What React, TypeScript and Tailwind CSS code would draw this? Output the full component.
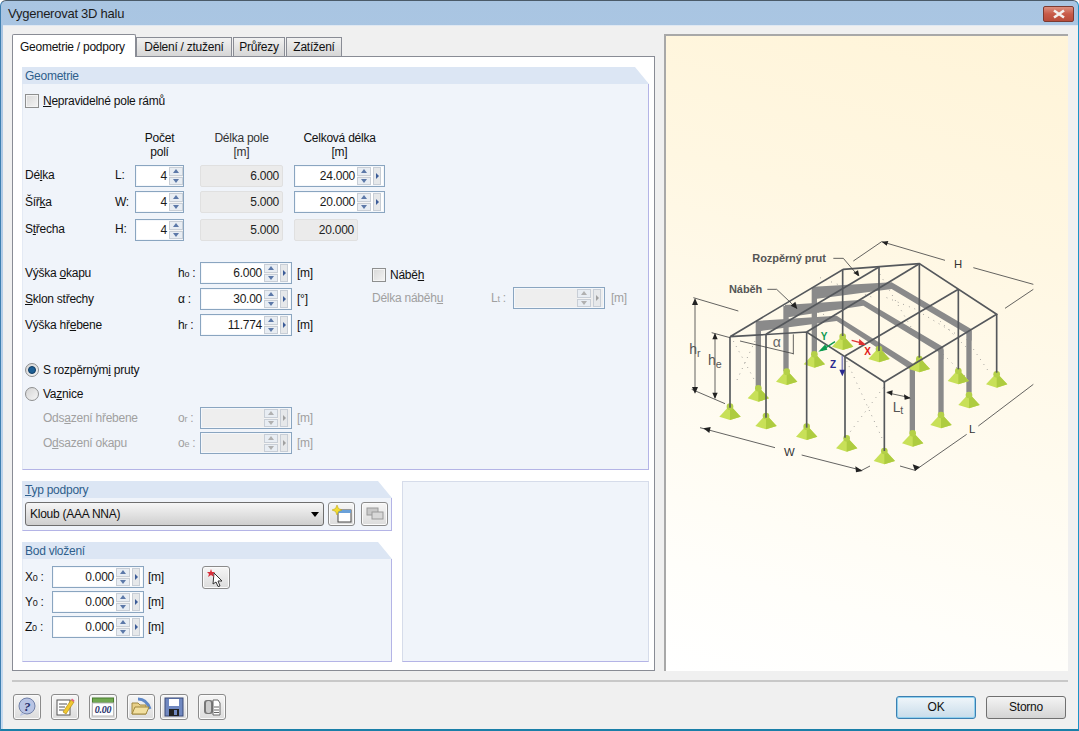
import type { ReactNode } from "react";

const font = "font-['Liberation_Sans',Arial,sans-serif]";

function Spin({ w, val, arrow = true, off = false }: { w: string; val?: string; arrow?: boolean; off?: boolean }) {
  return (
    <div className={`${w} h-[22px] flex items-center border border-[#8aa5c0] ${off ? "bg-[#eeeeee]" : "bg-white"} shadow-[inset_0_0_0_1px_#f4f7fb]`}>
      <span className="flex-1 text-right text-[#1a1a1a] pr-[2px] leading-none">{val}</span>
      <div className="w-[14px] h-[18px] flex flex-col gap-[1px] bg-[#f4f4f4]">
        <div className="flex-1 flex items-center justify-center bg-[#e8edf3] border border-[#c8ced6]">
          <div className={`w-0 h-0 border-x-[3px] border-x-transparent border-b-[4px] ${off ? "border-b-[#b0b0b0]" : "border-b-[#5c78a8]"}`} />
        </div>
        <div className="flex-1 flex items-center justify-center bg-[#e8edf3] border border-[#c8ced6]">
          <div className={`w-0 h-0 border-x-[3px] border-x-transparent border-t-[4px] ${off ? "border-t-[#b0b0b0]" : "border-t-[#5c78a8]"}`} />
        </div>
      </div>
      {arrow && (
        <div className="ml-[2px] mr-[3px] w-[8px] h-[18px] flex items-center justify-center bg-[#e6e8ea] border border-[#c8ced6]">
          <div className={`w-0 h-0 border-y-[3px] border-y-transparent border-l-[3px] ${off ? "border-l-[#a0a0a0]" : "border-l-[#3c5c98]"}`} />
        </div>
      )}
    </div>
  );
}

function ReadOnly({ w, val }: { w: string; val: string }) {
  return (
    <div className={`${w} h-[22px] flex items-center justify-end pr-[3px] bg-[#ebebeb] border border-[#e0e0e0] rounded-[2px] text-[#222]`}>
      {val}
    </div>
  );
}

function Check({ label }: { label: ReactNode }) {
  return (
    <div className="flex items-center gap-[4px] text-[#111]">
      <div className="w-[14px] h-[14px] border border-[#8e8f8f] bg-linear-to-br from-[#d8d8d8] to-[#f4f4f4] shadow-[inset_0_0_0_1px_#f4f4f4]" />
      <span>{label}</span>
    </div>
  );
}

function Radio({ on, label }: { on?: boolean; label: ReactNode }) {
  return (
    <div className="flex items-center gap-[4px] text-[#111] h-[14px]">
      <div className="w-[14px] h-[14px] rounded-full border border-[#8e8f8f] bg-linear-to-br from-[#d4d4d4] to-[#f6f6f6] flex items-center justify-center">
        {on && <div className="w-[8px] h-[8px] rounded-full bg-[#1d5f95] border border-[#0f3c63]" />}
      </div>
      <span>{label}</span>
    </div>
  );
}

function Group({ title, w, h, children }: { title?: ReactNode; w: string; h: string; children?: ReactNode }) {
  return (
    <div className={`${w} ${h} shrink-0 flex flex-col`}>
      {title && (
        <div className="h-[17px] shrink-0 pl-[3px] text-[#2f5f8c] leading-[18px] bg-[#dce6f4] [clip-path:polygon(0_0,calc(100%-14px)_0,100%_100%,0_100%)]">
          {title}
        </div>
      )}
      <div className="flex-1 bg-[#f0f4fa] border-b border-r border-[#b4b4e6] border-l border-l-[#e4eaf4] pl-[2px] pr-[3px]">{children}</div>
    </div>
  );
}

function Sym({ a, b }: { a: string; b?: string }) {
  return (
    <span>
      {a}
      {b && <span className="text-[9px]">{b}</span>}
      {" :"}
    </span>
  );
}

function ToolBtn({ w = "w-[28px]", h = "h-[26px]", children }: { w?: string; h?: string; children: ReactNode }) {
  return (
    <div className={`${w} ${h} flex items-center justify-center rounded-[3px] border border-[#8b8b8b] bg-linear-to-b from-[#f6f6f6] to-[#dcdcdc] shadow-[inset_0_0_0_1px_#fbfbfb]`}>
      {children}
    </div>
  );
}

function Foot({ x, y }: { x: number; y: number }) {
  return (
    <g>
      <polygon points={`${x - 32},${y + 12} ${x - 8},${y - 14} ${x + 8},${y - 14} ${x + 32},${y + 12} ${x},${y + 22}`} fill="#c8e058" />
      <polygon points={`${x},${y - 14} ${x + 8},${y - 14} ${x + 32},${y + 12} ${x},${y + 22}`} fill="#aecc40" />
      <circle cx={x} cy={y - 18} r={10} fill="#b4d048" />
    </g>
  );
}

function Diagram() {
  const feet = [
    [150, 575], [258, 603], [380, 635], [500, 670], [613, 708], [698, 655], [783, 600], [867, 540], [950, 478],
    [835, 468], [718, 432], [597, 402], [488, 365], [403, 418], [320, 470], [235, 520],
  ];
  const thin = [
    "M150 347V560", "M258 340V590", "M380 333V620", "M495 405V650", "M613 483V690",
    "M488 145V345", "M597 138V390", "M718 128V410", "M835 205V445", "M950 280V455",
    "M150 347L490 145L718 128L950 280L613 483L380 333L150 347",
    "M380 333L718 128", "M258 340L597 138", "M495 405L835 205",
  ];
  const thick = ["M235 305V500", "M318 255V450", "M403 200V395", "M697 440V635", "M783 385V580", "M867 330V515"];
  const bands = [
    "228,300 470,284 705,432 705,470 690,445 470,300 228,332",
    "315,252 550,236 790,378 790,415 775,392 550,254 315,290",
    "400,197 635,184 875,325 875,360 860,338 635,204 400,235",
  ];
  const dots = [
    "M160 360L225 480", "M225 360L165 490", "M500 420L610 660", "M610 500L505 640",
    "M620 230L720 270", "M730 280L830 340", "M780 300L860 380", "M600 160L700 330", "M330 240L480 300", "M420 170L580 230",
    "M850 340L925 450", "M790 400L860 470",
  ];
  const dim = [
    "M520 120L605 62", "M605 62L795 118", "M880 140L1060 190", "M975 262L1060 205", "M40 230L175 270",
    "M45 235V515", "M35 505L135 548", "M105 340V530", "M95 335L150 350", "M60 620L285 680", "M365 702L545 748",
    "M545 748L570 735", "M660 735L705 748", "M705 748L860 640", "M895 615L1060 490", "M620 515L690 530",
    "M180 360L340 398", "M340 340V400", "M460 112H490L535 165", "M262 205H290L350 262",
  ];
  const heads = [
    "605,62 625,60 620,74", "45,232 36,252 54,252", "45,518 36,498 54,498", "105,336 97,355 113,355", "105,534 97,515 113,515",
    "70,622 92,618 88,636", "548,750 526,736 528,754", "705,750 698,730 720,738", "620,513 638,508 636,524", "692,532 672,520 674,536",
    "538,166 520,156 534,148", "352,264 332,254 346,242",
  ];
  return (
    <svg width={380} height={260} viewBox="0 0 1140 780" className="block">
      {dots.map((d) => (
        <path key={d} d={d} stroke="#777" strokeWidth={3} strokeDasharray="2 16" fill="none" />
      ))}
      {thick.map((d) => (
        <path key={d} d={d} stroke="#8a8a8a" strokeWidth={16} fill="none" />
      ))}
      {bands.map((p) => (
        <polygon key={p} points={p} fill="#8a8a8a" />
      ))}
      {feet.map(([x, y]) => (
        <Foot key={`${x}-${y}`} x={x} y={y} />
      ))}
      {thin.map((d) => (
        <path key={d} d={d} stroke="#55585c" strokeWidth={5} fill="none" />
      ))}
      {dim.map((d) => (
        <path key={d} d={d} stroke="#444" strokeWidth={2.5} fill="none" />
      ))}
      {heads.map((p) => (
        <polygon key={p} points={p} fill="#222" />
      ))}
      <path d="M465 362L425 388" stroke="#0d9b50" strokeWidth={4} />
      <polygon points="415,392 436,370 442,386" fill="#0d9b50" />
      <path d="M515 358L552 368" stroke="#e03030" strokeWidth={4} />
      <polygon points="558,372 538,354 536,372" fill="#e03030" />
      <path d="M487 405V450" stroke="#8a8ac0" strokeWidth={5} />
      <polygon points="478,446 496,446 487,466" fill="#2a2a90" />
      <g fontFamily="'Liberation Sans',Arial,sans-serif">
        <text x={217} y={122} fontSize={33} fontWeight={700} fill="#555">Rozpěrný prut</text>
        <text x={147} y={216} fontSize={33} fontWeight={700} fill="#555">Náběh</text>
        <text x={822} y={140} fontSize={34} fill="#333">H</text>
        <text x={28} y={400} fontSize={42} fill="#555">h<tspan fontSize={32} dy={8}>r</tspan></text>
        <text x={84} y={432} fontSize={42} fill="#555">h<tspan fontSize={32} dy={8}>e</tspan></text>
        <text x={278} y={378} fontSize={42} fill="#666">α</text>
        <text x={638} y={572} fontSize={42} fill="#555">L<tspan fontSize={32} dy={8}>t</tspan></text>
        <text x={312} y={706} fontSize={34} fill="#333">W</text>
        <text x={867} y={636} fontSize={34} fill="#333">L</text>
        <text x={422} y={358} fontSize={30} fontWeight={700} fill="#0d9b50">Y</text>
        <text x={553} y={402} fontSize={30} fontWeight={700} fill="#e01818">X</text>
        <text x={450} y={440} fontSize={30} fontWeight={700} fill="#2a2a90">Z</text>
      </g>
    </svg>
  );
}

export default function App() {
  return (
    <div className={`${font} text-[12px] tracking-[-0.25px] w-[1079px] h-[731px] overflow-hidden flex flex-col rounded-t-[6px] border border-[#4a5a68] border-l-[#3f7fb0] border-r-[#1a93c8] border-b-2 border-b-[#1a7fa8] bg-linear-to-b from-[#a9c5e2] to-[#c4daf0]`}>
      {/* titulek */}
      <div className="h-[24px] shrink-0 flex items-center justify-between pl-[7px] pr-[4px] text-[#1c1c1c]">
        <span className="text-[13px] mt-[1px]">Vygenerovat 3D halu</span>
        <div className="w-[31px] h-[16px] mt-[1px] flex items-center justify-center rounded-[2px] border border-[#7d3a30] bg-linear-to-b from-[#dc9080] via-[#c85a48] to-[#b84c3a]">
          <svg width="14" height="10" viewBox="0 0 14 10">
            <path d="M2 1.5L12 8.5M12 1.5L2 8.5" stroke="#f4f0ee" strokeWidth="2.6" />
          </svg>
        </div>
      </div>

      <div className="flex-1 ml-[2px] bg-[#f0f0f0] border-t border-[#dfe8f2] flex flex-col pl-[9px] pr-[10px] pt-[8px]">
        <div className="flex gap-[9px]">
          {/* levá část */}
          <div className="w-[643px] flex flex-col">
            <div className="flex items-end h-[23px] relative z-10 -mb-[1px]">
              <div className="w-[124px] h-[23px] bg-white border border-b-0 border-[#898c95] rounded-t-[2px] pl-[7px] pt-[3px] text-[#111]">Geometrie / podpory</div>
              <div className="w-[96px] h-[20px] bg-linear-to-b from-[#f2f2f2] to-[#d6d6d6] border border-[#898c95] flex items-center justify-center text-[#111]">Dělení / ztužení</div>
              <div className="ml-[1px] w-[52px] h-[20px] bg-linear-to-b from-[#f2f2f2] to-[#d6d6d6] border border-[#898c95] flex items-center justify-center text-[#111]">Průřezy</div>
              <div className="ml-[1px] w-[56px] h-[20px] bg-linear-to-b from-[#f2f2f2] to-[#d6d6d6] border border-[#898c95] flex items-center justify-center text-[#111]">Zatížení</div>
            </div>
            <div className="h-[615px] bg-white border border-[#898c95] px-[9px] pt-[10px] flex flex-col gap-[11px]">
              <Group title="Geometrie" w="w-[627px]" h="h-[403px]">
                <div className="pt-[8px]">
                  <Check label={<><u>N</u>epravidelné pole rámů</>} />
                </div>
                <div className="mt-[21px] grid [grid-template-columns:90px_20px_65px_94px_91px] text-[#111]">
                  <div className="col-start-3 w-[49px] text-center leading-[14px] whitespace-nowrap h-[34px]">Počet<br />polí</div>
                  <div className="w-[83px] text-center leading-[14px] text-[#333]">Délka pole<br />[m]</div>
                  <div className="text-center leading-[14px]">Celková délka<br />[m]</div>

                  <div className="h-[26px] pb-[6px] flex items-center"><span>Dé<u>l</u>ka</span></div>
                  <div className="h-[26px] pb-[6px] flex items-center">L:</div>
                  <Spin w="w-[49px]" val="4" arrow={false} />
                  <ReadOnly w="w-[83px]" val="6.000" />
                  <Spin w="w-[91px]" val="24.000" />

                  <div className="h-[28px] pb-[6px] flex items-center"><span>Šíř<u>k</u>a</span></div>
                  <div className="h-[28px] pb-[6px] flex items-center">W:</div>
                  <Spin w="w-[49px]" val="4" arrow={false} />
                  <ReadOnly w="w-[83px]" val="5.000" />
                  <Spin w="w-[91px]" val="20.000" />

                  <div className="h-[26px] pb-[6px] flex items-center"><span>S<u>t</u>řecha</span></div>
                  <div className="h-[26px] pb-[6px] flex items-center">H:</div>
                  <Spin w="w-[49px]" val="4" arrow={false} />
                  <ReadOnly w="w-[83px]" val="5.000" />
                  <ReadOnly w="w-[64px]" val="20.000" />
                </div>

                <div className="mt-[17px] flex">
                  <div className="w-[347px] grid [grid-template-columns:153px_22px_97px_1fr] auto-rows-[26px] items-start text-[#111]">
                    <div className="h-[22px] flex items-center"><span>Výška <u>o</u>kapu</span></div>
                    <div className="h-[22px] flex items-center"><Sym a="h" b="o" /></div>
                    <Spin w="w-[92px]" val="6.000" />
                    <div className="h-[22px] flex items-center">[m]</div>
                    <div className="h-[22px] flex items-center"><span><u>S</u>klon střechy</span></div>
                    <div className="h-[22px] flex items-center"><Sym a="α" /></div>
                    <Spin w="w-[92px]" val="30.00" />
                    <div className="h-[22px] flex items-center">[°]</div>
                    <div className="h-[22px] flex items-center"><span>Výška hř<u>e</u>bene</span></div>
                    <div className="h-[22px] flex items-center"><Sym a="h" b="r" /></div>
                    <Spin w="w-[92px]" val="11.774" />
                    <div className="h-[22px] flex items-center">[m]</div>
                  </div>
                  <div className="flex-1 flex flex-col gap-[3px] pt-[4px] text-[#a0a0a0]">
                    <Check label={<>Nábě<u>h</u></>} />
                    <div className="flex items-center h-[22px]">
                      <span className="w-[119px]">Délka náběh<u>u</u></span>
                      <span className="w-[22px]"><Sym a="L" b="t" /></span>
                      <Spin w="w-[92px]" off />
                      <span className="ml-[6px]">[m]</span>
                    </div>
                  </div>
                </div>

                <div className="mt-[23px] flex flex-col gap-[10px]">
                  <Radio on label={<>S rozpěrným<u>i</u> pruty</>} />
                  <Radio label={<>Va<u>z</u>nice</>} />
                </div>
                <div className="mt-[6px] pl-[18px] grid [grid-template-columns:135px_22px_97px_1fr] auto-rows-[25px] items-start text-[#a0a0a0]">
                  <div className="h-[22px] flex items-center"><span>Ods<u>a</u>zení hřebene</span></div>
                  <div className="h-[22px] flex items-center"><Sym a="o" b="r" /></div>
                  <Spin w="w-[92px]" off />
                  <div className="h-[22px] flex items-center">[m]</div>
                  <div className="h-[22px] flex items-center"><span>O<u>d</u>sazení okapu</span></div>
                  <div className="h-[22px] flex items-center"><Sym a="o" b="e" /></div>
                  <Spin w="w-[92px]" off />
                  <div className="h-[22px] flex items-center">[m]</div>
                </div>
              </Group>

              <div className="flex gap-[10px]">
                <div className="flex flex-col gap-[11px]">
                  <Group title={<><u>T</u>yp podpory</>} w="w-[370px]" h="h-[50px]">
                    <div className="flex gap-[4px] items-center pt-[4px]">
                      <div className="w-[299px] h-[24px] flex items-center justify-between pl-[4px] pr-[4px] rounded-[3px] border border-[#6e6e6e] bg-linear-to-b from-[#f6f6f6] to-[#cfcfcf] text-[#111]">
                        <span>Kloub (AAA NNA)</span>
                        <div className="w-0 h-0 border-x-[4px] border-x-transparent border-t-[5px] border-t-black" />
                      </div>
                      <ToolBtn w="w-[27px]" h="h-[24px]">
                        <svg width="20" height="18" viewBox="0 0 20 18">
                          <rect x="6" y="5" width="13" height="12" fill="#fff" stroke="#444" />
                          <rect x="6" y="5" width="13" height="3" fill="#6aa0d8" />
                          <polygon points="5,0 6.5,3.5 10,5 6.5,6.5 5,10 3.5,6.5 0,5 3.5,3.5" fill="#f2dc30" stroke="#b89a10" strokeWidth=".5" />
                        </svg>
                      </ToolBtn>
                      <div className="ml-[2px]">
                        <ToolBtn w="w-[27px]" h="h-[24px]">
                          <svg width="20" height="16" viewBox="0 0 20 16">
                            <rect x="2" y="2" width="11" height="7" fill="#c8c8c8" stroke="#9a9a9a" />
                            <rect x="7" y="6" width="11" height="7" fill="#d8d8d8" stroke="#9a9a9a" />
                          </svg>
                        </ToolBtn>
                      </div>
                    </div>
                  </Group>
                  <Group title="Bod vložení" w="w-[370px]" h="h-[120px]">
                    <div className="flex pt-[7px]">
                      <div className="flex flex-col gap-[3px]">
                        {[["X", "0.000"], ["Y", "0.000"], ["Z", "0.000"]].map(([n, v]) => (
                          <div key={n} className="flex items-center text-[#111]">
                            <span className="w-[27px]"><Sym a={n} b="0" /></span>
                            <Spin w="w-[92px]" val={v} />
                            <span className="ml-[4px]">[m]</span>
                          </div>
                        ))}
                      </div>
                      <div className="ml-[38px]">
                        <ToolBtn h="h-[23px]">
                          <svg width="18" height="18" viewBox="0 0 18 18">
                            <polygon points="7,4 15,12 11,12 13,17 11,17.5 9,13 6,15" fill="#fff" stroke="#333" />
                            <polygon points="4,0 5,3 8,3 6,5 7,8 4,6 1,8 2,5 0,3 3,3" fill="#d8303c" />
                          </svg>
                        </ToolBtn>
                      </div>
                    </div>
                  </Group>
                </div>
                <div className="w-[247px] h-[181px] shrink-0 bg-[#f0f4fa] border border-[#d6dcea] border-b-[#b4b4e6]" />
              </div>
            </div>
          </div>

          {/* obrázek */}
          <div className="w-[404px] h-[637px] border-t-2 border-l-2 border-[#a8a8a8] bg-[linear-gradient(195deg,#fff4d8_0%,#fff7e2_30%,#fffbef_60%,#fffefa_85%,#ffffff_100%)] pt-[185px] pl-[14px]">
            <Diagram />
          </div>
        </div>

        <div className="mt-[9px] h-[2px] bg-[#c8c8c8]" />

        {/* spodní lišta */}
        <div className="mt-[12px] pl-[1px] flex items-center">
          <ToolBtn>
            <svg width="20" height="20" viewBox="0 0 20 20">
              <circle cx="10" cy="9" r="8" fill="#b8c4e4" stroke="#7080a8" />
              <path d="M4 16L3 19L8 17Z" fill="#b8c4e4" />
              <text x="10" y="14" textAnchor="middle" fontSize="13" fontWeight="700" fontStyle="italic" fill="#27306c" fontFamily="'Liberation Serif',serif">?</text>
            </svg>
          </ToolBtn>
          <div className="ml-[10px]">
            <ToolBtn>
              <svg width="20" height="20" viewBox="0 0 20 20">
                <rect x="2" y="3" width="13" height="15" fill="#fff" stroke="#555" />
                <path d="M4 7H12M4 10H10M4 13H9" stroke="#555" />
                <path d="M8 15L16 3L19 5L11 17Z" fill="#f0c830" stroke="#a88008" strokeWidth=".6" />
                <path d="M16 3L17 1.5L19.5 3.5L19 5Z" fill="#e06080" />
              </svg>
            </ToolBtn>
          </div>
          <div className="ml-[10px]">
            <ToolBtn>
              <svg width="22" height="20" viewBox="0 0 22 20">
                <rect x="0.5" y="1" width="21" height="5" fill="#70a850" stroke="#4a7c30" />
                <rect x="0.5" y="6" width="21" height="13" fill="#fff" stroke="#bbb" />
                <text x="11" y="16" textAnchor="middle" fontSize="10" fontStyle="italic" fontWeight="700" fill="#27306c" fontFamily="'Liberation Serif',serif">0.00</text>
              </svg>
            </ToolBtn>
          </div>
          <div className="ml-[10px]">
            <ToolBtn>
              <svg width="22" height="20" viewBox="0 0 22 20">
                <path d="M8 2C14 2 18 6 20 12" stroke="#5f88c8" strokeWidth="3" fill="none" />
                <path d="M2 6H8L10 8H16V17H2Z" fill="#e8d088" stroke="#a08840" />
                <path d="M2 17L5 10H19L16 17Z" fill="#f2e0a0" stroke="#a08840" />
              </svg>
            </ToolBtn>
          </div>
          <div className="ml-[5px]">
            <ToolBtn>
              <svg width="20" height="20" viewBox="0 0 20 20">
                <rect x="1" y="1" width="18" height="18" fill="#7088c0" stroke="#3a4a78" />
                <rect x="5" y="2" width="10" height="7" fill="#fff" />
                <rect x="5" y="12" width="10" height="7" fill="#222" />
                <rect x="10" y="13" width="3" height="5" fill="#7088c0" />
              </svg>
            </ToolBtn>
          </div>
          <div className="ml-[10px]">
            <ToolBtn>
              <svg width="20" height="20" viewBox="0 0 20 20">
                <rect x="2" y="3" width="9" height="14" rx="3" fill="#777" />
                <rect x="4" y="4" width="5" height="12" rx="2" fill="#ccc" />
                <path d="M11 3H16L18 6V18H11Z" fill="#fff" stroke="#666" />
                <path d="M12 10H17M12 13H17M12 15.5H17" stroke="#666" />
              </svg>
            </ToolBtn>
          </div>
          <div className="ml-auto flex gap-[10px] mr-[2px]">
            <div className="w-[80px] h-[23px] flex items-center justify-center rounded-[3px] border border-[#3c7fb1] bg-linear-to-b from-[#f0f6fa] to-[#c8dcea] shadow-[inset_0_0_0_1px_#8fd0ee] text-[#111]">OK</div>
            <div className="w-[80px] h-[23px] flex items-center justify-center rounded-[3px] border border-[#707070] bg-linear-to-b from-[#f4f4f4] to-[#d4d4d4] text-[#111]">Storno</div>
          </div>
        </div>
      </div>
    </div>
  );
}
